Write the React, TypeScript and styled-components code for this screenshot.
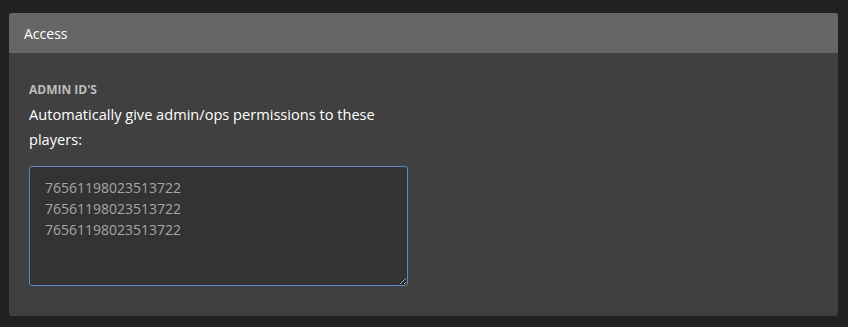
import React from "react";
import styled, { createGlobalStyle } from "styled-components";

const Global = createGlobalStyle`
  html, body { margin: 0; padding: 0; background: #212121; }
  body { font-family: "Open Sans", "Liberation Sans", sans-serif; }
  * { box-sizing: border-box; }
`;

const Page = styled.div`
  padding: 13px 10px 11px 9px;
  background: #212121;
  min-height: 327px;
`;

const Card = styled.section`
  background: #404040;
  border-radius: 3px;
  overflow: hidden;
  height: 303px;
`;

const CardHeader = styled.header`
  background: #666666;
  height: 40px;
  display: flex;
  align-items: center;
  padding: 0 15px;
  color: #ffffff;
  font-size: 14px;
  font-weight: 400;
`;

const CardBody = styled.div`
  padding: 30px 20px 20px 20px;
  display: flex;
  flex-direction: column;
`;

const Field = styled.div`
  width: 379px;
  display: flex;
  flex-direction: column;
`;

const Label = styled.label`
  font-size: 12px;
  font-weight: 700;
  color: #bdbdbd;
  text-transform: uppercase;
  line-height: 14px;
`;

const Description = styled.p`
  margin: 5px 0 0 0;
  font-size: 14.6px;
  line-height: 25px;
  color: #ffffff;
`;

const TextArea = styled.textarea`
  margin-top: 14px;
  width: 379px;
  height: 120px;
  background: #333333;
  border: 1px solid #5f86cc;
  border-radius: 3px;
  color: #a6a6a6;
  font-family: "Open Sans", "Liberation Sans", sans-serif;
  font-size: 14px;
  line-height: 21px;
  padding: 10px 15px;
  outline: none;
  resize: vertical;
`;

export default function App() {
  const ids = ["76561198023513722", "76561198023513722", "76561198023513722"].join("\n");
  return (
    <>
      <Global />
      <Page>
        <Card>
          <CardHeader>Access</CardHeader>
          <CardBody>
            <Field>
              <Label>Admin ID's</Label>
              <Description>Automatically give admin/ops permissions to these players:</Description>
              <TextArea defaultValue={ids} spellCheck={false} />
            </Field>
          </CardBody>
        </Card>
      </Page>
    </>
  );
}
